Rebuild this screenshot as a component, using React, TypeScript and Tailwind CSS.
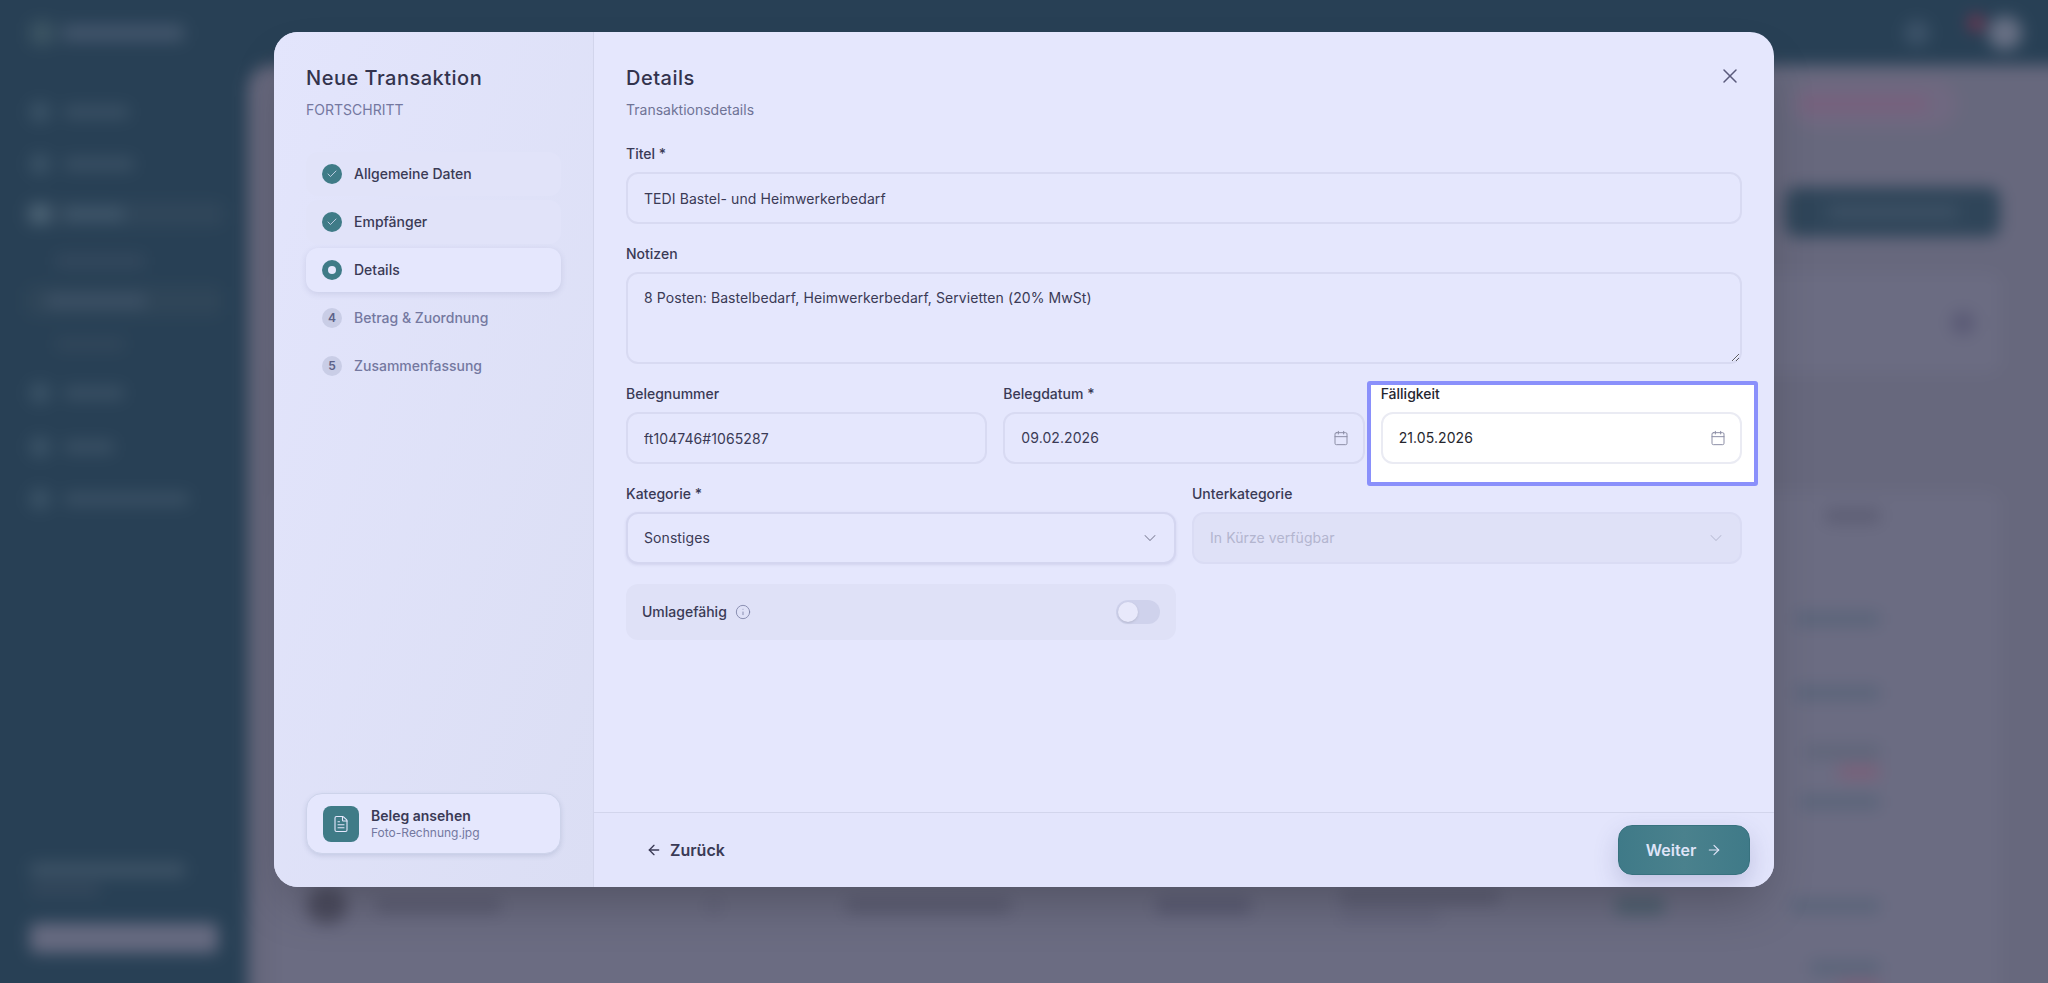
import React from 'react';
import { ArrowLeft, ArrowRight, Calendar, Check, ChevronDown, FileText, Info, X } from 'lucide-react';

const Bar = ({ className }: { className: string }) => <div className={className} />;

const NavRow = ({ bright, wide }: { bright?: boolean; wide?: string }) => (
  <div className={`flex items-center gap-[14px] h-[24px] ${bright ? '-ml-[6px] pl-[6px] w-[200px] rounded-md bg-[#30465a]' : ''}`}>
    <div className={`w-[20px] h-[20px] rounded-md ${bright ? 'bg-[#4d6476]' : 'bg-[#3a5266]'}`} />
    <div className={`h-[12px] rounded-sm ${wide} ${bright ? 'bg-[#41586c]' : 'bg-[#3b5165]'}`} />
  </div>
);

const RightBar = ({ mt, w, color = 'bg-[#5a6479]' }: { mt: string; w: string; color?: string }) => (
  <div className={`flex justify-end pr-[120px] ${mt}`}>
    <div className={`h-[14px] rounded-sm ${w} ${color}`} />
  </div>
);

// the page behind the dialog, only visible blurred. it overshoots the window by 20px so the blur has no pale edge
const Backdrop = () => (
  <div className="absolute -left-[20px] -top-[20px] w-[2088px] h-[1023px] flex flex-col overflow-hidden bg-[#284055] blur-[8px]">
    <div className="h-[85px] pt-[20px] shrink-0 flex items-center pl-[50px] pr-[46px]">
      <div className="w-[24px] h-[24px] rounded-md bg-[#3c5463]" />
      <div className="ml-[8px] w-[122px] h-[16px] rounded-sm bg-[#43566c]" />
      <div className="ml-auto w-[26px] h-[26px] rounded-full bg-[#3c5268]" />
      <div className="ml-[38px] -mt-[20px] w-[16px] h-[16px] rounded-full bg-[#7a3550]" />
      <div className="ml-[4px] w-[34px] h-[34px] rounded-full bg-[#687084]" />
    </div>
    <div className="flex flex-1 min-h-0">
      <div className="w-[268px] shrink-0 flex flex-col pl-[50px] pr-[22px] pt-[35px] pb-[50px]">
        <NavRow wide="w-[65px]" />
        <div className="mt-[28px]"><NavRow wide="w-[70px]" /></div>
        <div className="mt-[26px]"><NavRow bright wide="w-[60px]" /></div>
        <div className="mt-[29px] ml-[25px] h-[12px] w-[90px] rounded-sm bg-[#35495e]" />
        <div className="mt-[19px] -ml-[4px] h-[30px] w-[195px] rounded-md bg-[#2f4558] pl-[20px] flex items-center">
          <div className="h-[12px] w-[100px] rounded-sm bg-[#3e5267]" />
        </div>
        <div className="mt-[22px] ml-[25px] h-[12px] w-[70px] rounded-sm bg-[#32475b]" />
        <div className="mt-[31px]"><NavRow wide="w-[60px]" /></div>
        <div className="mt-[30px]"><NavRow wide="w-[50px]" /></div>
        <div className="mt-[28px]"><NavRow wide="w-[125px]" /></div>
        <div className="mt-auto h-[14px] w-[155px] rounded-sm bg-[#3e5366]" />
        <div className="mt-[8px] h-[10px] w-[70px] rounded-sm bg-[#37495d]" />
        <div className="mt-[28px] h-[30px] w-[188px] rounded-md bg-[#666a80]" />
      </div>
      <div className="flex-1 min-w-0 rounded-tl-3xl bg-[#67687d]">
        <div className="mt-[15px] flex justify-end pr-[111px]">
          <div className="w-[165px] h-[48px] rounded-full border-2 border-[#74677f] bg-[#6f6880] flex items-center px-[8px]">
            <div className="h-[14px] w-[125px] rounded-sm bg-[#785f7c]" />
          </div>
        </div>
        <div className="mt-[59px] flex justify-end pr-[68px]">
          <div className="w-[215px] h-[50px] rounded-xl bg-[#2f4559] flex items-center justify-center">
            <div className="h-[12px] w-[130px] rounded-sm bg-[#3f5266]" />
          </div>
        </div>
        <div className="mt-[36px] mr-[68px] ml-[25px] h-[100px] rounded-xl bg-[#6b6c82] flex items-center justify-end pr-[25px]">
          <div className="w-[24px] h-[24px] rounded-full bg-[#5a5a75]" />
        </div>
        <div className="mt-[119px] mr-[68px] ml-[25px] pb-[20px] pt-[17px] rounded-xl bg-[#6b6c82]">
          <div className="flex justify-end pr-[120px]"><div className="h-[14px] w-[55px] rounded-sm bg-[#5c5d73]" /></div>
          <RightBar mt="mt-[89px]" w="w-[85px]" />
          <RightBar mt="mt-[60px]" w="w-[85px]" />
          <RightBar mt="mt-[45px]" w="w-[75px]" color="bg-[#5f6579]" />
          <RightBar mt="mt-[6px]" w="w-[42px]" color="bg-[#7a6079]" />
          <RightBar mt="mt-[16px]" w="w-[80px]" />
          <div className="mt-[79px] flex items-center h-[36px] pl-[34px] pr-[120px]">
            <Bar className="w-[40px] h-[36px] rounded-full bg-[#4d4d60]" />
            <Bar className="ml-[29px] w-[125px] h-[14px] rounded-sm bg-[#5c5d73]" />
            <Bar className="ml-[208px] w-[10px] h-[14px] rounded-sm bg-[#5f6076]" />
            <Bar className="ml-[127px] w-[165px] h-[14px] rounded-sm bg-[#5b5c72]" />
            <Bar className="ml-[145px] w-[95px] h-[16px] rounded-sm bg-[#5a5b73]" />
            <div className="ml-[89px] w-[160px] flex flex-col gap-[8px]">
              <Bar className="h-[12px] w-[160px] rounded-sm bg-[#5b5c72]" />
              <Bar className="h-[10px] w-[100px] rounded-sm bg-[#62637a]" />
            </div>
            <Bar className="ml-[115px] w-[50px] h-[18px] rounded-md bg-[#4f6070]" />
            <Bar className="ml-auto w-[90px] h-[14px] rounded-sm bg-[#5a6479]" />
          </div>
          <RightBar mt="mt-[37px]" w="w-[70px]" />
          <RightBar mt="mt-[6px]" w="w-[42px]" color="bg-[#7a6079]" />
        </div>
      </div>
    </div>
  </div>
);

const steps = [
  { label: 'Allgemeine Daten', state: 'done' },
  { label: 'Empfänger', state: 'done' },
  { label: 'Details', state: 'active' },
  { label: 'Betrag & Zuordnung', state: 'todo', n: 4 },
  { label: 'Zusammenfassung', state: 'todo', n: 5 },
];

const Step = ({ label, state, n }: { label: string; state: string; n?: number }) => (
  <div
    className={`h-[44px] rounded-xl flex items-center gap-3 px-4 ${
      state === 'active' ? 'bg-[#e5e7fd] shadow-[0_2px_6px_rgba(70,75,130,0.14)]' : state === 'done' ? 'bg-[#e1e3f9]' : ''
    }`}
  >
    {state === 'done' && (
      <div className="w-5 h-5 rounded-full bg-[#3f7b87] flex items-center justify-center text-[#e5e7fd]">
        <Check size={12} strokeWidth={1.5} />
      </div>
    )}
    {state === 'active' && (
      <div className="w-5 h-5 rounded-full bg-[#3f7b87] flex items-center justify-center">
        <div className="w-2 h-2 rounded-full bg-[#e5e7fd]" />
      </div>
    )}
    {state === 'todo' && (
      <div className="w-5 h-5 rounded-full bg-[#c9cde6] flex items-center justify-center text-xs font-semibold text-[#5c6188]">{n}</div>
    )}
    <span className={`text-sm font-[450] ${state === 'todo' ? 'text-[#7478a0]' : 'text-[#3a3a55]'}`}>{label}</span>
  </div>
);

const Label = ({ children, dark }: { children: React.ReactNode; dark?: boolean }) => (
  <div className={`h-5 mb-2 text-sm leading-5 font-medium ${dark ? 'text-[#26262e]' : 'text-[#3a3a55]'}`}>{children}</div>
);

const inputCls =
  'w-full h-[52px] px-[16px] rounded-xl border-2 border-[#d8daf2] bg-[#e5e7fd] text-sm tracking-[0.08px] text-[#3a3a55] outline-none';

const DateField = ({ value, white }: { value: string; white?: boolean }) => (
  <div
    className={`w-full h-[52px] pl-[16px] pr-[14px] rounded-xl border-2 flex items-center justify-between text-sm tracking-[0.08px] ${
      white ? 'bg-white border-[#eaebf3] text-[#26262e]' : 'bg-[#e5e7fd] border-[#d8daf2] text-[#3a3a55]'
    }`}
  >
    <span>{value}</span>
    <Calendar size={16} strokeWidth={1.5} className="text-[#8d8fa6]" />
  </div>
);

const Dialog = () => (
  <div className="flex w-[1500px] h-[855px] rounded-3xl overflow-hidden bg-[#e5e7fd] shadow-2xl">
    <aside className="w-[320px] shrink-0 flex flex-col p-8 border-r border-[#d2d5ec] bg-gradient-to-br from-[#e3e5fc] to-[#dbdef4]">
      <h2 className="h-7 text-[20px] leading-7 font-medium tracking-[0.5px] text-[#33334d]">Neue Transaktion</h2>
      <p className="mt-2 h-5 text-sm leading-5 uppercase text-[#7478a0]">Fortschritt</p>
      <div className="mt-8 flex flex-col gap-1">
        {steps.map((s) => (
          <Step key={s.label} {...s} />
        ))}
      </div>
      <div className="mt-auto h-[61px] mb-px rounded-2xl border border-[#cdd3ea] bg-[#e5e7fd] shadow-[0_2px_5px_rgba(70,85,130,0.16)] flex items-center gap-3 px-4">
        <div className="w-9 h-9 rounded-lg bg-[#3f7b87] flex items-center justify-center text-[#e5e7fd]">
          <FileText size={18} strokeWidth={1.5} />
        </div>
        <div className="flex flex-col">
          <span className="text-sm leading-[18px] font-semibold text-[#3a3a55]">Beleg ansehen</span>
          <span className="text-xs leading-4 text-[#7478a0]">Foto-Rechnung.jpg</span>
        </div>
      </div>
    </aside>
    <main className="flex-1 min-w-0 flex flex-col">
      <div className="flex-1 min-h-0 px-8 pt-8">
        <div className="flex items-start justify-between">
          <div>
            <h3 className="h-7 text-[20px] leading-7 font-medium tracking-[0.5px] text-[#33334d]">Details</h3>
            <p className="mt-2 h-5 text-sm leading-5 text-[#6f7396]">Transaktionsdetails</p>
          </div>
          <button className="text-[#5a5a7c]">
            <X size={24} strokeWidth={1.5} />
          </button>
        </div>
        <div className="mt-6 flex flex-col gap-5">
          <div>
            <Label>Titel *</Label>
            <input readOnly value="TEDI Bastel- und Heimwerkerbedarf" className={inputCls} />
          </div>
          <div>
            <Label>Notizen</Label>
            <textarea
              readOnly
              value="8 Posten: Bastelbedarf, Heimwerkerbedarf, Servietten (20% MwSt)"
              className="block w-full h-[92px] px-[16px] py-[14px] rounded-xl border-2 border-[#d8daf2] bg-[#e5e7fd] text-sm tracking-[0.08px] text-[#3a3a55] outline-none"
            />
          </div>
          <div className="grid grid-cols-3 gap-4">
            <div>
              <Label>Belegnummer</Label>
              <input readOnly value="ft104746#1065287" className={inputCls} />
            </div>
            <div>
              <Label>Belegdatum *</Label>
              <DateField value="09.02.2026" />
            </div>
            <div className="relative">
              <div className="absolute -left-[14px] -right-[16px] -top-[3px] -bottom-[22px] border-4 border-[#8a90fb] rounded-[3px] bg-white" />
              <div className="relative">
                <Label dark>Fälligkeit</Label>
                <DateField value="21.05.2026" white />
              </div>
            </div>
          </div>
          <div className="grid grid-cols-2 gap-4">
            <div>
              <Label>Kategorie *</Label>
              <div className="h-[52px] pl-[16px] pr-[14px] rounded-xl border-2 border-[#d4d6f0] bg-[#e5e7fd] shadow-[0_1px_3px_rgba(70,75,130,0.12)] flex items-center justify-between text-sm tracking-[0.08px] text-[#3a3a55]">
                Sonstiges
                <ChevronDown size={20} strokeWidth={1.25} className="text-[#85879f]" />
              </div>
              <div className="mt-5 h-14 rounded-xl bg-[#dfe1f7] px-4 flex items-center justify-between">
                <div className="flex items-center gap-2 text-sm font-[450] text-[#3a3a55]">
                  Umlagefähig
                  <Info size={16} strokeWidth={1.25} className="text-[#7a7ea3]" />
                </div>
                <div className="w-11 h-6 rounded-full bg-[#cfd2ec] flex items-center pl-[2px]">
                  <div className="w-5 h-5 rounded-full bg-[#e8e9fb] shadow-sm" />
                </div>
              </div>
            </div>
            <div>
              <Label>Unterkategorie</Label>
              <div className="h-[52px] pl-[16px] pr-[14px] rounded-xl border-2 border-[#dadcf4] bg-[#dfe1f7] flex items-center justify-between text-sm tracking-[0.08px] text-[#b3b5cf]">
                In Kürze verfügbar
                <ChevronDown size={20} strokeWidth={1.25} className="text-[#bcbed6]" />
              </div>
            </div>
          </div>
        </div>
      </div>
      <div className="h-[75px] shrink-0 border-t border-[#d2d5ec] bg-[#e3e5fc] flex items-center justify-between pl-[52px] pr-6">
        <button className="flex items-center gap-2 text-base font-semibold text-[#3a3a55]">
          <ArrowLeft size={16} />
          Zurück
        </button>
        <button className="w-[132px] h-[50px] rounded-[14px] border border-[#38727f] bg-gradient-to-r from-[#3f7a88] via-[#4a818d] to-[#3f7a88] shadow-[0_10px_24px_rgba(70,75,130,0.22)] flex items-center justify-center gap-[10px] text-base font-semibold text-[#dfe4f8]">
          Weiter
          <ArrowRight size={16} strokeWidth={1.75} />
        </button>
      </div>
    </main>
  </div>
);

export default function App() {
  return (
    <div className="relative h-[983px] overflow-hidden font-['Inter',sans-serif]">
      <Backdrop />
      <div className="absolute inset-0 flex justify-center items-start pt-8">
        <Dialog />
      </div>
    </div>
  );
}
